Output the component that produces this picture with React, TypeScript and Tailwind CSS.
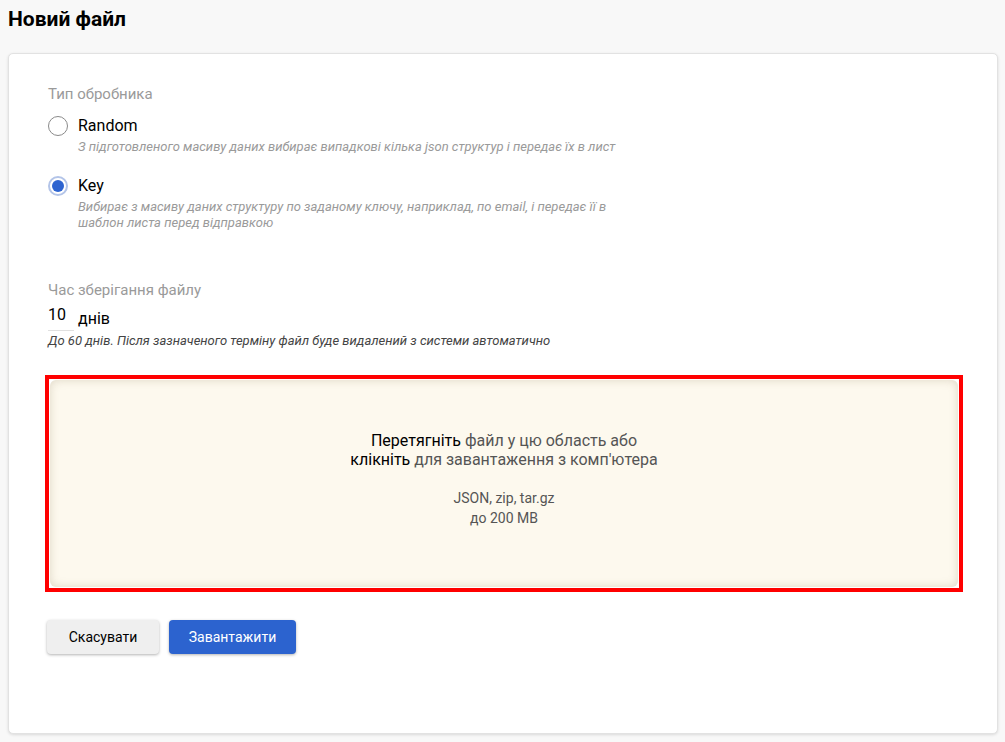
export default function App() {
  return (
    <div
      className="min-h-screen bg-[#f8f8f8] pl-2 pr-[7px] pt-[7px] text-black"
      style={{ fontFamily: "Roboto, 'Liberation Sans', sans-serif" }}
    >
      <h1 className="text-[21px] font-bold leading-[24px]">Новий файл</h1>

      <div className="mt-[22px] h-[681px] rounded-[5px] border border-[#e2e2e2] bg-white pl-[39px] pr-[34px] pt-[30px] shadow-[0_1px_3px_rgba(0,0,0,0.12)]">
        <div className="text-[15px] leading-[20px] text-[#9a9a9a]">Тип обробника</div>

        <div className="mt-[10px]">
          <div className="flex h-6 items-center gap-[10px]">
            <span className="h-5 w-5 rounded-full border border-[#8a8a8a] bg-white" />
            <span className="text-[16px]">Random</span>
          </div>
          <div className="pl-[30px] text-[13px] italic leading-[18px] text-[#9a9a9a]">
            З підготовленого масиву даних вибирає випадкові кілька json структур і передає їх в лист
          </div>
        </div>

        <div className="mt-[18px]">
          <div className="flex h-6 items-center gap-[10px]">
            <span className="flex h-5 w-5 items-center justify-center rounded-full border-2 border-[#b3c4e8] bg-white">
              <span className="h-3 w-3 rounded-full bg-[#2d63d0]" />
            </span>
            <span className="text-[16px]">Key</span>
          </div>
          <div className="mt-[1px] w-[560px] pl-[30px] text-[13px] italic leading-[16px] text-[#9a9a9a]">
            Вибирає з масиву даних структуру по заданому ключу, наприклад, по email, і передає її в шаблон листа перед відправкою
          </div>
        </div>

        <div className="mt-[49px] text-[15px] leading-[20px] text-[#9a9a9a]">Час зберігання файлу</div>
        <div className="mt-[3px] flex items-end gap-1">
          <div className="h-[28px] w-[26px] border-b border-[#e0e0e0] text-[16px] leading-[24px]">10</div>
          <span className="text-[16px] leading-[24px]">днів</span>
        </div>
        <div className="mt-[1px] text-[13px] italic leading-[18px] text-[#444]">
          До 60 днів. Після зазначеного терміну файл буде видалений з системи автоматично
        </div>

        <div className="-ml-[3px] mt-[25px] border-4 border-[#ff0000] p-px">
          <div className="h-[207px] rounded-[6px] bg-[#fdf9ee] pt-[51px] text-center shadow-[inset_0_0_10px_rgba(120,100,60,0.22)]">
            <div className="text-[16px] leading-[19px] text-[#555]">
              <span className="text-black">Перетягніть</span> файл у цю область або
            </div>
            <div className="text-[16px] leading-[19px] text-[#555]">
              <span className="text-black">клікніть</span> для завантаження з комп'ютера
            </div>
            <div className="mt-[19px] text-[14px] leading-[20px] text-[#555]">JSON, zip, tar.gz</div>
            <div className="text-[14px] leading-[20px] text-[#555]">до 200 MB</div>
          </div>
        </div>

        <div className="-ml-px mt-[28px] flex gap-[10px]">
          <button className="h-[34px] w-[112px] rounded-[4px] bg-[#efefef] text-[14px] text-black shadow-[0_1px_3px_rgba(0,0,0,0.3)]">
            Скасувати
          </button>
          <button className="h-[34px] w-[127px] rounded-[4px] bg-[#2c63cf] text-[14px] text-white shadow-[0_1px_3px_rgba(0,0,0,0.3)]">
            Завантажити
          </button>
        </div>
      </div>
    </div>
  );
}
